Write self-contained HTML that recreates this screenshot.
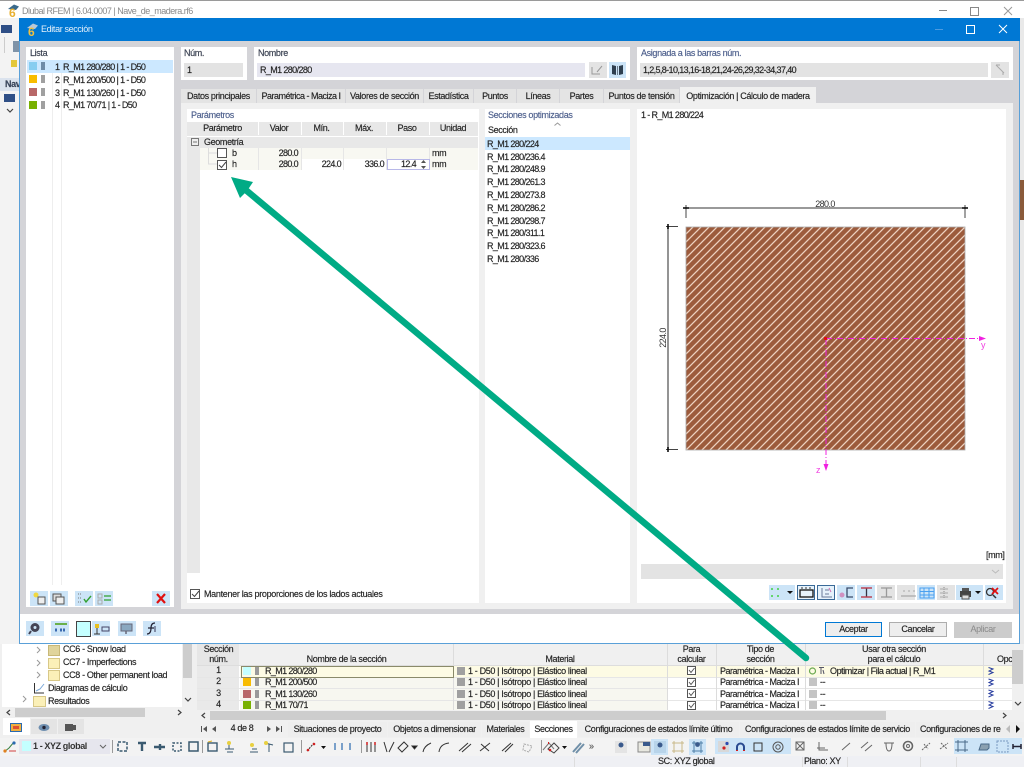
<!DOCTYPE html>
<html lang="es"><head><meta charset="utf-8"><title>Editar sección</title>
<style>
html,body{margin:0;padding:0;width:1024px;height:767px;overflow:hidden;background:#f0f0f0;font-family:"Liberation Sans",sans-serif}
#w{position:absolute;left:0;top:0;width:1024px;height:767px;overflow:hidden;filter:blur(.35px);letter-spacing:-.36px}
.b{position:absolute}
.t{position:absolute;white-space:nowrap;font-size:9px;line-height:11px;color:#222;-webkit-text-stroke:.15px #222}
.n{letter-spacing:-.62px}
.h{color:#4d5f8c;-webkit-text-stroke:.15px #4d5f8c}
.c{text-align:center}
.r{text-align:right}
.ic{position:absolute;width:18px;height:15px;background:#cce4f7}
.g{background:#e3e3e3}
.tab{position:absolute;top:89px;height:14px;background:#e4e4e4;font-size:9px;line-height:15px;text-align:center;color:#222;white-space:nowrap;-webkit-text-stroke:.15px #222}
.bt{position:absolute;top:722px;height:15px;background:#eeeeee;font-size:9px;line-height:14px;text-align:center;color:#222;white-space:nowrap;-webkit-text-stroke:.15px #222}
.hd{position:absolute;background:#e8e8e8;font-size:9px;line-height:13px;text-align:center;color:#222;top:122px;height:13px;-webkit-text-stroke:.15px #222}
svg{position:absolute;overflow:visible}
.chk{position:absolute;width:8px;height:8px;border:1px solid #555;background:#fff}
</style></head><body><div id="w">

<!-- main window -->
<div class="b" style="left:0;top:0;width:1024px;height:1px;background:#9a9a9a"></div>
<div class="b" style="left:0;top:1px;width:1024px;height:17px;background:#fff"></div>
<svg style="left:6px;top:4px" width="14" height="14"><path d="M2 5 L8 0.500 L13 2.500 L10 6 Z" fill="#3a6a8c"/><text x="3" y="13" font-size="12" font-weight="bold" font-family="Liberation Sans" fill="#e8b030">6</text></svg>
<div class="t n" style="left:22px;top:6px;color:#8a8a8a;-webkit-text-stroke:0;letter-spacing:-.5px">Dlubal RFEM | 6.04.0007 | Nave_de_madera.rf6</div>
<div class="b" style="left:939px;top:10px;width:8px;height:1px;background:#888"></div>
<div class="b" style="left:970px;top:7px;width:7px;height:7px;border:1px solid #888"></div>
<svg style="left:1003px;top:6px" width="10" height="10"><path d="M1 1L9 9M9 1L1 9" stroke="#999" fill="none"/></svg>

<div class="b" style="left:0;top:18px;width:19px;height:626px;background:#f3f3f3"></div>
<div class="b" style="left:1px;top:25px;width:11px;height:8px;background:#2f4f86"></div>
<div class="b" style="left:4px;top:37px;width:1px;height:16px;background:#ccc"></div>
<div class="b" style="left:13px;top:41px;width:6px;height:11px;background:#7f93a8"></div>
<div class="b" style="left:11px;top:60px;width:6px;height:7px;background:#e4c83c"></div>
<div class="b" style="left:0;top:78px;width:19px;height:13px;background:#dbe3ee"></div>
<div class="t" style="left:5px;top:79px;font-weight:bold;color:#3c4b66">Nav</div>
<div class="b" style="left:4px;top:94px;width:11px;height:8px;background:#2f4f86"></div>
<svg style="left:6px;top:108px" width="8" height="6"><path d="M1 1L4 4L7 1" stroke="#444" fill="none" stroke-width="1.2"/></svg>
<div class="b" style="left:1020px;top:18px;width:4px;height:626px;background:#e9e9e9"></div>
<div class="b" style="left:1020px;top:180px;width:4px;height:40px;background:#8a5a3a"></div>

<!-- lower left tree -->
<div class="b" style="left:2px;top:644px;width:191px;height:91px;background:#fff"></div>
<div class="b" style="left:182px;top:644px;width:11px;height:63px;background:#f0f0f0"></div>
<div class="b" style="left:183px;top:644px;width:9px;height:34px;background:#cdcdcd"></div>
<svg style="left:184px;top:697px" width="8" height="6"><path d="M1 1L4 4L7 1" stroke="#444" fill="none" stroke-width="1.2"/></svg>
<svg style="left:36px;top:645px" width="6" height="60" fill="none" stroke="#999"><path d="M1 2L4 5L1 8M1 15L4 18L1 21M1 27L4 30L1 33"/><path d="M-13 51L-10 54L-13 57"/></svg>
<div class="b" style="left:48px;top:645px;width:10px;height:9px;background:#e0d49c;border:1px solid #c8b878"></div>
<div class="b" style="left:48px;top:658px;width:10px;height:9px;background:#fbf0b8;border:1px solid #d8c888"></div>
<div class="b" style="left:48px;top:670px;width:10px;height:9px;background:#fbf0b8;border:1px solid #d8c888"></div>
<svg style="left:33px;top:682px" width="12" height="12" fill="none"><path d="M1.500 1V11H11" stroke="#333"/><path d="M3 9L7 7L11 2" stroke="#7aa8d8"/></svg>
<div class="b" style="left:33px;top:696px;width:11px;height:9px;background:#fbf0b8;border:1px solid #d8c888"></div>
<div class="t" style="left:63px;top:644px">CC6 - Snow load</div>
<div class="t" style="left:63px;top:657px">CC7 - Imperfections</div>
<div class="t" style="left:63px;top:670px">CC8 - Other permanent load</div>
<div class="t" style="left:48px;top:683px">Diagramas de cálculo</div>
<div class="t" style="left:48px;top:696px">Resultados</div>
<div class="b" style="left:2px;top:707px;width:191px;height:11px;background:#f0f0f0"></div>
<div class="b" style="left:15px;top:708px;width:130px;height:9px;background:#cdcdcd"></div>
<svg style="left:6px;top:709px" width="180" height="7" fill="none" stroke="#444" stroke-width="1.2"><path d="M4 1L1 3.500L4 6M172 1L175 3.500L172 6"/></svg>
<div class="b" style="left:2px;top:718px;width:191px;height:17px;background:#f0f0f0"></div>
<div class="b" style="left:3px;top:718px;width:27px;height:17px;background:#fff"></div>
<div class="b" style="left:31px;top:719px;width:26px;height:15px;background:#e4e4e4"></div>
<div class="b" style="left:58px;top:719px;width:26px;height:15px;background:#e4e4e4"></div>
<svg style="left:10px;top:722px" width="13" height="11"><rect x="0.500" y="1.500" width="11" height="8" fill="#f0b040" stroke="#2a6ab0"/><rect x="3" y="4" width="6" height="3" fill="#e05030"/></svg>
<svg style="left:38px;top:723px" width="12" height="9"><ellipse cx="6" cy="4.500" rx="5.500" ry="3.500" fill="#6f8fb0"/><circle cx="6" cy="4.500" r="1.700" fill="#223"/></svg>
<div class="b" style="left:65px;top:724px;width:8px;height:7px;background:#555"></div>
<div class="b" style="left:73px;top:725px;width:3px;height:5px;background:#555"></div>

<!-- lower table -->
<div class="b" style="left:197px;top:644px;width:827px;height:66px;background:#fff"></div>
<div class="b" style="left:197px;top:644px;width:815px;height:21px;background:#f0f0f0"></div>
<div class="b" style="left:197px;top:644px;width:42px;height:21px;background:#e6e6e6"></div>
<div class="b" style="left:197px;top:666px;width:42px;height:44px;background:#e9e9e9"></div>
<div class="b" style="left:197px;top:665px;width:815px;height:1px;background:#ddd"></div>
<div class="b" style="left:240px;top:666px;width:772px;height:11px;background:#fdfbe4"></div>
<div class="b" style="left:240px;top:678px;width:476px;height:32px;background:#f7f7f0"></div>
<div class="b" style="left:667px;top:678px;width:49px;height:32px;background:#fff"></div>
<div class="b" style="left:197px;top:677px;width:815px;height:1px;background:#e6e6e6"></div>
<div class="b" style="left:197px;top:688px;width:815px;height:1px;background:#e6e6e6"></div>
<div class="b" style="left:197px;top:700px;width:815px;height:1px;background:#e6e6e6"></div>
<div class="b" style="left:453px;top:644px;width:1px;height:66px;background:#dcdcdc"></div>
<div class="b" style="left:667px;top:644px;width:1px;height:66px;background:#dcdcdc"></div>
<div class="b" style="left:716px;top:644px;width:1px;height:66px;background:#dcdcdc"></div>
<div class="b" style="left:805px;top:644px;width:1px;height:66px;background:#dcdcdc"></div>
<div class="b" style="left:983px;top:644px;width:1px;height:66px;background:#dcdcdc"></div>
<div class="b" style="left:241px;top:666px;width:211px;height:10px;border:1px solid #8a8a6a;background:#fdfbe4"></div>
<div class="t c" style="left:197px;top:645px;width:43px;line-height:9.500px">Sección<br>núm.</div>
<div class="t c" style="left:240px;top:654px;width:213px">Nombre de la sección</div>
<div class="t c" style="left:453px;top:654px;width:214px">Material</div>
<div class="t c" style="left:667px;top:645px;width:49px;line-height:9.500px">Para<br>calcular</div>
<div class="t c" style="left:716px;top:645px;width:89px;line-height:9.500px">Tipo de<br>sección</div>
<div class="t c" style="left:805px;top:645px;width:178px;line-height:9.500px">Usar otra sección<br>para el cálculo</div>
<div class="t" style="left:997px;top:654px">Opc</div>

<div class="t c" style="left:197px;top:665px;width:43px">1</div>
<div class="t c" style="left:197px;top:676px;width:43px">2</div>
<div class="t c" style="left:197px;top:688px;width:43px">3</div>
<div class="t c" style="left:197px;top:699px;width:43px">4</div>
<div class="b" style="left:243px;top:667px;width:8px;height:8px;background:#c4ffff"></div>
<div class="b" style="left:243px;top:678px;width:8px;height:8px;background:#f8bc00"></div>
<div class="b" style="left:243px;top:690px;width:8px;height:8px;background:#b86868"></div>
<div class="b" style="left:243px;top:701px;width:8px;height:8px;background:#78b000"></div>
<div class="b" style="left:255px;top:667px;width:4px;height:8px;background:#9a9a9a"></div>
<div class="b" style="left:255px;top:678px;width:4px;height:8px;background:#9a9a9a"></div>
<div class="b" style="left:255px;top:690px;width:4px;height:8px;background:#9a9a9a"></div>
<div class="b" style="left:255px;top:701px;width:4px;height:8px;background:#9a9a9a"></div>
<div class="t n" style="left:265px;top:666px">R_M1 280/280</div>
<div class="t n" style="left:265px;top:677px">R_M1 200/500</div>
<div class="t n" style="left:265px;top:689px">R_M1 130/260</div>
<div class="t n" style="left:265px;top:700px;height:10px;overflow:hidden">R_M1 70/71</div>
<div class="b" style="left:457px;top:667px;width:8px;height:8px;background:#a0a0a0"></div>
<div class="b" style="left:457px;top:678px;width:8px;height:8px;background:#a0a0a0"></div>
<div class="b" style="left:457px;top:690px;width:8px;height:8px;background:#a0a0a0"></div>
<div class="b" style="left:457px;top:701px;width:8px;height:8px;background:#a0a0a0"></div>
<div class="t" style="left:468px;top:666px">1 - D50 | Isótropo | Elástico lineal</div>
<div class="t" style="left:468px;top:677px">1 - D50 | Isótropo | Elástico lineal</div>
<div class="t" style="left:468px;top:689px">1 - D50 | Isótropo | Elástico lineal</div>
<div class="t" style="left:468px;top:700px;height:10px;overflow:hidden">1 - D50 | Isótropo | Elástico lineal</div>
<svg style="left:687px;top:666px" width="10" height="44" fill="#fff" stroke="#555"><rect x=".5" y=".5" width="8" height="8"/><rect x=".5" y="12.5" width="8" height="8"/><rect x=".5" y="23.5" width="8" height="8"/><rect x=".5" y="35.5" width="8" height="8"/><path d="M2 4L4 6.500L7.500 2M2 16L4 18.500L7.500 14M2 27L4 29.500L7.500 25M2 39L4 41.500L7.500 37" fill="none"/></svg>
<div class="t" style="left:720px;top:666px;letter-spacing:-.5px">Paramétrica - Maciza I</div>
<div class="t" style="left:720px;top:677px;letter-spacing:-.5px">Paramétrica - Maciza I</div>
<div class="t" style="left:720px;top:689px;letter-spacing:-.5px">Paramétrica - Maciza I</div>
<div class="t" style="left:720px;top:700px;height:10px;overflow:hidden;letter-spacing:-.5px">Paramétrica - Maciza I</div>
<svg style="left:808px;top:666px" width="18" height="10" fill="none"><circle cx="4.500" cy="5" r="3" stroke="#6aa84f" stroke-width="1.2"/><path d="M11 1.500H16M13 1.500V8" stroke="#556"/><path d="M15 4L16 8" stroke="#556"/></svg>
<div class="b" style="left:809px;top:678px;width:8px;height:8px;background:#c4c4c4"></div>
<div class="b" style="left:809px;top:690px;width:8px;height:8px;background:#c4c4c4"></div>
<div class="b" style="left:809px;top:701px;width:8px;height:8px;background:#c4c4c4"></div>
<div class="t" style="left:830px;top:666px;letter-spacing:-.43px">Optimizar | Fila actual | R_M1</div>
<div class="t" style="left:820px;top:677px">--</div>
<div class="t" style="left:820px;top:689px">--</div>
<div class="t" style="left:820px;top:700px">--</div>
<svg style="left:987px;top:666px" width="8" height="44" fill="none" stroke="#2a3fa0"><path d="M1.500 1.500L6 3L2 5L6 6.500L1.500 8.500M1.500 13L6 14.500L2 16.500L6 18L1.500 20M1.500 24L6 25.500L2 27.500L6 29L1.500 31M1.500 35.500L6 37L2 39L6 40.500L1.500 42.500"/></svg>
<div class="b" style="left:1012px;top:644px;width:12px;height:66px;background:#f0f0f0"></div>
<div class="b" style="left:1012px;top:650px;width:11px;height:34px;background:#cdcdcd"></div>
<svg style="left:1014px;top:701px" width="8" height="6"><path d="M1 1L4 4L7 1" stroke="#444" fill="none" stroke-width="1.2"/></svg>
<div class="b" style="left:197px;top:710px;width:827px;height:11px;background:#f0f0f0"></div>
<div class="b" style="left:210px;top:711px;width:676px;height:9px;background:#cdcdcd"></div>
<svg style="left:201px;top:712px" width="810" height="7" fill="none" stroke="#444" stroke-width="1.2"><path d="M4 1L1 3.500L4 6M802 1L805 3.500L802 6"/></svg>

<!-- lower tabs -->
<div class="b" style="left:197px;top:721px;width:827px;height:17px;background:#f0f0f0"></div>
<svg style="left:201px;top:725px" width="85" height="8" fill="#555"><path d="M0 1H1V7H0ZM6 1V7L2 4ZM15 1V7L11 4ZM66 1V7L70 4ZM75 1V7L79 4ZM80 1H81V7H80Z"/></svg>
<div class="t c" style="left:222px;top:723px;width:40px">4 de 8</div>
<div class="bt" style="left:288px;width:99px">Situaciones de proyecto</div>
<div class="bt" style="left:388px;width:93px">Objetos a dimensionar</div>
<div class="bt" style="left:482px;width:47px">Materiales</div>
<div class="bt" style="left:530px;width:47px;background:#fff;top:721px;height:17px;line-height:16px">Secciones</div>
<div class="bt" style="left:578px;width:161px">Configuraciones de estados límite último</div>
<div class="bt" style="left:740px;width:175px">Configuraciones de estados límite de servicio</div>
<div class="bt" style="left:916px;width:108px;text-align:left;text-indent:4px;overflow:hidden">Configuraciones de re</div>
<div class="b" style="left:1001px;top:722px;width:23px;height:15px;background:#eee"></div>
<svg style="left:1005px;top:725px" width="15" height="9"><path d="M5 0V8L1 4Z" fill="#bbb"/><path d="M11 0V8L15 4Z" fill="#111"/></svg>

<!-- lower toolbar -->
<div class="b" style="left:0;top:738px;width:1024px;height:18px;background:#f3f3f3"></div>
<div class="b" style="left:0;top:756px;width:1024px;height:11px;background:#eff0f4"></div>
<div class="b" style="left:574px;top:757px;width:1px;height:10px;background:#ddd"></div>
<div class="b" style="left:802px;top:757px;width:1px;height:10px;background:#ddd"></div>
<div class="b" style="left:847px;top:757px;width:1px;height:10px;background:#ddd"></div>
<div class="b" style="left:920px;top:757px;width:1px;height:10px;background:#ddd"></div>
<div class="b" style="left:956px;top:757px;width:1px;height:10px;background:#ddd"></div>
<div class="b" style="left:19px;top:739px;width:91px;height:15px;background:#e6e6ee"></div>
<div class="b" style="left:22px;top:741px;width:9px;height:10px;background:#c4ffff"></div>
<div class="t" style="left:33px;top:741px;font-weight:bold;-webkit-text-stroke:0;letter-spacing:-.4px;color:#333">1 - XYZ global</div>
<svg style="left:99px;top:744px" width="8" height="6"><path d="M1 1L4 4L7 1" stroke="#666" fill="none"/></svg>
<svg style="left:3px;top:740px" width="14" height="14" fill="none"><path d="M1 12L6 8L11 2" stroke="#3a8040"/><circle cx="2" cy="11" r="1.600" fill="#e08020"/><circle cx="11" cy="3" r="1.600" fill="#2a6ab0"/><path d="M6 11H13" stroke="#d04040"/></svg>
<div class="b" style="left:112px;top:740px;width:1px;height:13px;background:#999"></div>
<svg style="left:116px;top:740px" width="100" height="14" fill="none" stroke="#3a5a70" stroke-width="1.5">
<rect x="2" y="2" width="9" height="9" stroke-dasharray="3 1.5"/><path d="M22 3H30M26 3V11" stroke-width="2.4"/><path d="M38 7H49M44 4V10" stroke-width="2.4"/><rect x="57" y="3" width="8" height="8" stroke-dasharray="2 1.5"/><rect x="73" y="2" width="9" height="9"/></svg>
<div class="b" style="left:202px;top:740px;width:1px;height:13px;background:#999"></div>
<svg style="left:207px;top:740px" width="90" height="14" fill="none" stroke="#3a5a70">
<rect x="1" y="3" width="9" height="8" stroke-width="1.4"/><path d="M1 2L5 1" stroke="#e0b020"/><path d="M18 9H27M20 12H26M22 3V9" /><circle cx="22" cy="3" r="2" fill="#e8d040" stroke="none"/><path d="M43 12H51M45 9H50"/><circle cx="45" cy="5" r="2" fill="#e8d040" stroke="none"/><path d="M58 3L66 5M62 4V12"/><circle cx="59" cy="3" r="2" fill="#e8d040" stroke="none"/><rect x="77" y="3" width="9" height="9" stroke-width="1.2"/></svg>
<div class="b" style="left:301px;top:740px;width:1px;height:13px;background:#999"></div>
<svg style="left:306px;top:740px" width="66" height="14" fill="none"><path d="M1 11L8 3" stroke="#333" stroke-dasharray="2 1"/><circle cx="2" cy="10" r="1.300" fill="#d02020"/><circle cx="8" cy="4" r="1.300" fill="#d02020"/><path d="M15 6H20L17.500 9Z" fill="#111"/><path d="M29 3V10M36 3V10M44 3V10" stroke="#2a6ab0" stroke-width="1.2"/></svg>
<div class="b" style="left:361px;top:740px;width:1px;height:13px;background:#999"></div>
<svg style="left:362px;top:740px" width="230" height="14" fill="none" stroke="#333" stroke-width="1">
<path d="M5 2V12M9 2V12M13 2V12" stroke-width="1"/><path d="M5 2V5M13 2V5" stroke="#d02020" stroke-width="1.5"/><path d="M22 2L25 12M32 2L27 12"/><path d="M36 8L42 2L46 6L40 12Z"/><path d="M50 6H55L52.500 9Z" fill="#111"/><path d="M61 12Q62 6 69 3"/><path d="M77 12Q78 4 87 3"/><path d="M97 11L106 3M100 12L109 4" /><path d="M118 11L128 3M119 4L127 11" /><path d="M140 11L149 3M143 12L151 4"/><path d="M162 4L170 6L167 12L161 10Z" stroke="#aaa" stroke-dasharray="2 1"/><path d="M181 10L187 3L192 9" stroke="#777"/><path d="M186 3L187 3" stroke="#d02020" stroke-width="2"/></svg>
<div class="b" style="left:541px;top:740px;width:1px;height:13px;background:#999"></div>
<svg style="left:546px;top:740px" width="60" height="14" fill="none"><path d="M2 9L8 3L13 8L8 13Z" stroke="#444"/><circle cx="4" cy="10" r="1.300" fill="#d02020"/><path d="M16 6H21L18.500 9Z" fill="#111"/><path d="M27 12L35 3M30 13L38 4" stroke="#7090a8" stroke-width="2"/></svg>
<div class="t" style="left:589px;top:741px;color:#777">»</div>
<svg style="left:615px;top:741px" width="12" height="12"><rect width="12" height="12" fill="#ddd" opacity=".7"/><circle cx="6" cy="4" r="2.500" fill="#3a5a8c"/></svg>
<svg style="left:637px;top:741px" width="14" height="12"><rect x="1" y="1" width="12" height="10" fill="#e8e8e0" stroke="#888"/><rect x="6" y="1" width="7" height="4" fill="#3a5a8c"/></svg>
<div class="b" style="left:651px;top:739px;width:17px;height:16px;background:#cce4f7"></div>
<svg style="left:654px;top:741px" width="12" height="12"><rect width="12" height="12" fill="#b8d4ea"/><circle cx="6" cy="4" r="2.500" fill="#3a5a8c"/></svg>
<svg style="left:672px;top:741px" width="12" height="12" fill="none" stroke="#c8b888"><rect x="2" y="2" width="8" height="8"/><path d="M0 2H12M0 10H12M2 0V12M10 0V12"/></svg>
<div class="b" style="left:689px;top:739px;width:17px;height:16px;background:#cce4f7"></div>
<svg style="left:691px;top:741px" width="13" height="12" fill="none" stroke="#5080a8"><path d="M1 2H12M1 10H12M3 0V12M10 0V12"/><circle cx="6.500" cy="3.500" r="2.400" fill="#3a5a8c" stroke="none"/></svg>
<div class="b" style="left:715px;top:738px;width:76px;height:16px;background:#cce4f7"></div>
<svg style="left:717px;top:740px" width="72" height="13" fill="none"><rect x="1" y="1" width="11" height="11" fill="#d8d8d8"/><circle cx="10" cy="3.500" r="1.600" fill="#2a4ab0"/><circle cx="7" cy="8" r="1.600" fill="#d02020"/><path d="M20 11V7A3.500 3.500 0 0 1 27 7V11" stroke="#2a4a90" stroke-width="2"/><path d="M20 10V11M27 10V11" stroke="#d02020" stroke-width="2"/><rect x="37" y="3" width="8" height="8" stroke="#333"/><circle cx="61" cy="7" r="5" stroke="#555"/><circle cx="61" cy="7" r="2.200" stroke="#555"/></svg>
<svg style="left:790px;top:740px" width="180" height="13" fill="none" stroke="#666">
<rect x="6" y="2" width="8" height="8"/><path d="M6 2L14 10M14 2L6 10"/><path d="M29 2V10H38M27 8H35"/><path d="M52 10L60 3"/><path d="M71 8L78 2M75 11L82 5"/><path d="M94 3H104M96 3Q96 11 99 11Q102 11 102 3"/><circle cx="118" cy="6" r="4.500" stroke-width="1.6"/><circle cx="118" cy="6" r="1.500"/><path d="M132 10L140 3M134 4L138 9" stroke-dasharray="2 1"/><path d="M150 9L158 3M151 3L157 9" stroke-dasharray="2 1"/><path d="M168 9L176 3M169 3L175 9" stroke-dasharray="1.5 1"/></svg>
<div class="b" style="left:954px;top:738px;width:68px;height:16px;background:#cce4f7"></div>
<svg style="left:955px;top:740px" width="66" height="13" fill="none" stroke="#4a6a88"><path d="M0 2H13M0 10H13M3 0V12M10 0V12"/><path d="M24 10L26 4H34V8L32 10Z" fill="#8aa0b0"/><rect x="42" y="1" width="11" height="11" stroke="#7a9ac0" stroke-dasharray="2 1"/><path d="M58 4V9M66 4V9M58 6.500H66" stroke="#223" stroke-width="1.5"/></svg>

<div class="t" style="left:658px;top:756px">SC: XYZ global</div>
<div class="t" style="left:804px;top:756px">Plano: XY</div>

<!-- dialog -->
<div class="b" style="left:19px;top:18px;width:1001px;height:626px;background:#fff;outline:1px solid #5aa0d8;outline-offset:-1px"></div>
<div class="b" style="left:19px;top:18px;width:1001px;height:23px;background:#0078d4"></div>
<svg style="left:25px;top:23px" width="14" height="14"><path d="M2 5 L8 0.500 L13 2.500 L10 6 Z" fill="#b8c8d8"/><text x="3" y="13" font-size="12" font-weight="bold" font-family="Liberation Sans" fill="#f0c040">6</text></svg>
<div class="t" style="left:41px;top:24px;color:#e4f0fa;-webkit-text-stroke:0">Editar sección</div>
<div class="b" style="left:935px;top:29px;width:8px;height:1px;background:#4d9be0"></div>
<div class="b" style="left:966px;top:25px;width:7px;height:7px;border:1px solid #fff"></div>
<svg style="left:998px;top:24px" width="10" height="10"><path d="M1 1L9 9M9 1L1 9" stroke="#fff" fill="none"/></svg>
<div class="b" style="left:20px;top:41px;width:999px;height:573px;background:#d4d4d8"></div>
<div class="b" style="left:20px;top:614px;width:999px;height:29px;background:#fff"></div>

<!-- lista -->
<div class="b" style="left:26px;top:47px;width:148px;height:560px;background:#fff"></div>
<div class="t" style="left:30px;top:48px;color:#3f4a63">Lista</div>
<div class="b" style="left:27px;top:60px;width:146px;height:13px;background:#cce8ff"></div>
<div class="b" style="left:61px;top:73px;width:1px;height:512px;background:#eee"></div>
<div class="b" style="left:52px;top:73px;width:1px;height:512px;background:#eee"></div>
<div class="b" style="left:29px;top:62px;width:8px;height:8px;background:#87cdf0"></div>
<div class="b" style="left:29px;top:75px;width:8px;height:8px;background:#f8bc00"></div>
<div class="b" style="left:29px;top:88px;width:8px;height:8px;background:#b86868"></div>
<div class="b" style="left:29px;top:101px;width:8px;height:8px;background:#78b000"></div>
<div class="b" style="left:41px;top:62px;width:4px;height:8px;background:#6e8ca8"></div>
<div class="b" style="left:41px;top:75px;width:4px;height:8px;background:#a0a0a0"></div>
<div class="b" style="left:41px;top:88px;width:4px;height:8px;background:#a0a0a0"></div>
<div class="b" style="left:41px;top:101px;width:4px;height:8px;background:#a0a0a0"></div>
<div class="t" style="left:55px;top:62px">1</div><div class="t n" style="left:63px;top:62px">R_M1 280/280 | 1 - D50</div>
<div class="t" style="left:55px;top:75px">2</div><div class="t n" style="left:63px;top:75px">R_M1 200/500 | 1 - D50</div>
<div class="t" style="left:55px;top:88px">3</div><div class="t n" style="left:63px;top:88px">R_M1 130/260 | 1 - D50</div>
<div class="t" style="left:55px;top:100px">4</div><div class="t n" style="left:63px;top:100px">R_M1 70/71 | 1 - D50</div>

<div class="ic" style="left:30px;top:591px"></div><div class="ic" style="left:50px;top:591px"></div><div class="ic" style="left:75px;top:591px"></div><div class="ic" style="left:95px;top:591px"></div><div class="ic" style="left:152px;top:591px"></div>
<svg style="left:30px;top:591px" width="140" height="15" fill="none">
<circle cx="6" cy="4" r="2.500" fill="#f0d840"/><rect x="8" y="6" width="7" height="7" stroke="#555" fill="#eee"/>
<rect x="23" y="3" width="8" height="7" stroke="#555" fill="#ddd"/><rect x="26" y="6" width="8" height="7" stroke="#555" fill="#eee"/>
<path d="M48 3H52M48 7H52M48 11H52" stroke="#777" stroke-dasharray="1 1"/><path d="M54 8L56 11L61 5" stroke="#30a030" stroke-width="1.4"/>
<rect x="68" y="3" width="4" height="4" stroke="#aaa"/><rect x="68" y="9" width="4" height="4" stroke="#aaa"/><path d="M74 5H81M74 9H81" stroke="#30a030" stroke-width="1.2"/>
<path d="M127 3L135 12M135 3L127 12" stroke="#e01010" stroke-width="2.200"/></svg>

<!-- num / nombre / asignada -->
<div class="b" style="left:181px;top:47px;width:66px;height:33px;background:#fff"></div>
<div class="t" style="left:184px;top:48px;color:#3f4a63">Núm.</div>
<div class="b g" style="left:184px;top:63px;width:59px;height:14px"></div>
<div class="t" style="left:187px;top:65px">1</div>
<div class="b" style="left:254px;top:47px;width:376px;height:33px;background:#fff"></div>
<div class="t" style="left:258px;top:48px;color:#3f4a63">Nombre</div>
<div class="b" style="left:257px;top:63px;width:328px;height:14px;background:#e6e6f0"></div>
<div class="t n" style="left:260px;top:65px">R_M1 280/280</div>
<div class="b g" style="left:589px;top:62px;width:18px;height:16px"></div>
<svg style="left:591px;top:64px" width="14" height="12" fill="none" stroke="#999"><path d="M1 3V10H9M6 8L11 2"/></svg>
<div class="b" style="left:609px;top:62px;width:17px;height:16px;background:#cce4f7"></div>
<svg style="left:611px;top:64px" width="13" height="12"><path d="M1 1L5 2V11L1 10ZM12 1L8 2V11L12 10Z" fill="#2f3f4f"/><path d="M6 2H7V11H6Z" fill="#6a7a8a"/></svg>
<div class="b" style="left:637px;top:47px;width:376px;height:33px;background:#fff"></div>
<div class="t h" style="left:641px;top:48px">Asignada a las barras núm.</div>
<div class="b g" style="left:640px;top:63px;width:348px;height:14px"></div>
<div class="t n" style="left:643px;top:65px">1,2,5,8-10,13,16-18,21,24-26,29,32-34,37,40</div>
<div class="b g" style="left:991px;top:62px;width:18px;height:16px"></div>
<svg style="left:995px;top:64px" width="11" height="12" fill="none" stroke="#aaa"><path d="M1 1L8 8V11M1 1H5M4 4L9 9"/></svg>

<!-- tabs -->
<div class="tab" style="left:181px;width:75px">Datos principales</div>
<div class="tab" style="left:257px;width:88px;letter-spacing:-.5px">Paramétrica - Maciza I</div>
<div class="tab" style="left:346px;width:77px">Valores de sección</div>
<div class="tab" style="left:424px;width:49px">Estadística</div>
<div class="tab" style="left:474px;width:42px">Puntos</div>
<div class="tab" style="left:517px;width:42px">Líneas</div>
<div class="tab" style="left:560px;width:43px">Partes</div>
<div class="tab" style="left:604px;width:75px">Puntos de tensión</div>
<div class="tab" style="left:680px;width:136px;top:87px;height:16px;background:#f0f0f0;line-height:18px">Optimización | Cálculo de madera</div>
<div class="b" style="left:181px;top:103px;width:832px;height:506px;background:#f0f0f0"></div>

<!-- parametros -->
<div class="b" style="left:187px;top:109px;width:292px;height:494px;background:#fff"></div>
<div class="t h" style="left:191px;top:110px">Parámetros</div>
<div class="b" style="left:187px;top:122px;width:291px;height:14px;background:#e8e8e8"></div>
<div class="hd" style="left:188px;width:69px">Parámetro</div>
<div class="hd" style="left:258px;width:42px">Valor</div>
<div class="hd" style="left:301px;width:41px">Mín.</div>
<div class="hd" style="left:343px;width:42px">Máx.</div>
<div class="hd" style="left:386px;width:42px">Paso</div>
<div class="hd" style="left:429px;width:48px">Unidad</div>
<div class="b" style="left:258px;top:122px;width:1px;height:13px;background:#fff"></div>
<div class="b" style="left:301px;top:122px;width:1px;height:13px;background:#fff"></div>
<div class="b" style="left:343px;top:122px;width:1px;height:13px;background:#fff"></div>
<div class="b" style="left:386px;top:122px;width:1px;height:13px;background:#fff"></div>
<div class="b" style="left:429px;top:122px;width:1px;height:13px;background:#fff"></div>
<div class="b" style="left:187px;top:137px;width:291px;height:11px;background:#e8e8e8"></div>
<div class="b" style="left:187px;top:148px;width:13px;height:425px;background:#e8e8e8"></div>
<div class="b" style="left:200px;top:148px;width:278px;height:22px;background:#f8f8f2"></div>
<div class="b" style="left:301px;top:159px;width:128px;height:11px;background:#fff"></div>
<div class="b" style="left:258px;top:148px;width:1px;height:22px;background:#e6e6e6"></div>
<div class="b" style="left:301px;top:148px;width:1px;height:22px;background:#e6e6e6"></div>
<div class="b" style="left:343px;top:148px;width:1px;height:22px;background:#e6e6e6"></div>
<div class="b" style="left:386px;top:148px;width:1px;height:22px;background:#e6e6e6"></div>
<div class="b" style="left:429px;top:148px;width:1px;height:22px;background:#e6e6e6"></div>
<svg style="left:191px;top:138px" width="9" height="9" fill="none" stroke="#777"><rect x=".5" y=".5" width="7" height="7" fill="#eee"/><path d="M2 4H6"/></svg>
<div class="t" style="left:204px;top:137px">Geometría</div>
<svg style="left:208px;top:148px" width="10" height="18" fill="none" stroke="#ddd"><path d="M.5 0V16H10M.5 5H10"/></svg>
<div class="chk" style="left:217px;top:148px"></div>
<div class="chk" style="left:217px;top:160px"></div>
<svg style="left:218px;top:161px" width="9" height="9" fill="none" stroke="#444"><path d="M1 4L3.500 6.500L8 1"/></svg>
<div class="t" style="left:232px;top:148px">b</div>
<div class="t" style="left:232px;top:159px">h</div>
<div class="t r n" style="left:258px;top:148px;width:40px">280.0</div>
<div class="t r n" style="left:258px;top:159px;width:40px">280.0</div>
<div class="t r n" style="left:301px;top:159px;width:40px">224.0</div>
<div class="t r n" style="left:343px;top:159px;width:41px">336.0</div>
<div class="b" style="left:387px;top:159px;width:41px;height:9px;border:1px solid #b8b8e8;background:#fff"></div>
<div class="t r n" style="left:387px;top:159px;width:29px">12.4</div>
<svg style="left:421px;top:160px" width="5" height="9"><path d="M0 3L2.500 0L5 3ZM0 6L2.500 9L5 6Z" fill="#555"/></svg>
<div class="t" style="left:432px;top:148px">mm</div>
<div class="t" style="left:432px;top:159px">mm</div>
<div class="chk" style="left:190px;top:589px"></div>
<svg style="left:191px;top:590px" width="9" height="9" fill="none" stroke="#444"><path d="M1 4L3.500 6.500L8 1"/></svg>
<div class="t" style="left:204px;top:589px;letter-spacing:-.31px">Mantener las proporciones de los lados actuales</div>

<!-- secciones optimizadas -->
<div class="b" style="left:485px;top:109px;width:145px;height:494px;background:#fff"></div>
<div class="t h" style="left:488px;top:110px">Secciones optimizadas</div>
<svg style="left:554px;top:122px" width="7" height="4" fill="none" stroke="#999"><path d="M.5 3.500L3.500 1L6.500 3.500"/></svg>
<div class="t" style="left:488px;top:125px">Sección</div>
<div class="b" style="left:485px;top:137px;width:145px;height:13px;background:#cce8ff"></div>
<div class="t n" style="left:487px;top:139px">R_M1 280/224</div>
<div class="t n" style="left:487px;top:152px">R_M1 280/236.4</div>
<div class="t n" style="left:487px;top:164px">R_M1 280/248.9</div>
<div class="t n" style="left:487px;top:177px">R_M1 280/261.3</div>
<div class="t n" style="left:487px;top:190px">R_M1 280/273.8</div>
<div class="t n" style="left:487px;top:203px">R_M1 280/286.2</div>
<div class="t n" style="left:487px;top:216px">R_M1 280/298.7</div>
<div class="t n" style="left:487px;top:228px">R_M1 280/311.1</div>
<div class="t n" style="left:487px;top:241px">R_M1 280/323.6</div>
<div class="t n" style="left:487px;top:254px">R_M1 280/336</div>

<!-- preview -->
<div class="b" style="left:637px;top:109px;width:369px;height:494px;background:#fff"></div>
<div class="t n" style="left:641px;top:110px">1 - R_M1 280/224</div>
<svg style="left:0;top:0" width="1024" height="767">
<defs><pattern id="p" width="8" height="8" patternUnits="userSpaceOnUse"><rect width="8" height="8" fill="#9c5b3c"/><path d="M-2 2L2 -2M0 8L8 0M6 10L10 6" stroke="#eed2c0" stroke-width="1.300"/></pattern></defs>
<rect x="686" y="227" width="279" height="223" fill="url(#p)" stroke="#aaa" stroke-width=".8"/>
<path d="M686 208H965" stroke="#333" stroke-width="1"/><path d="M686 205V218M965 205V218" stroke="#444"/><path d="M683 208H689M962 208H968" stroke="#000" stroke-width="1.500"/>
<path d="M668 226V450" stroke="#666" stroke-width="1.400"/><path d="M666 226.500H678M666 449.500H678" stroke="#444"/><path d="M668 224V229M668 447V452" stroke="#000" stroke-width="1.500"/>
<text x="825" y="207" font-family="Liberation Sans" font-size="9" letter-spacing="-.6" fill="#333" text-anchor="middle">280.0</text>
<text transform="translate(666 338) rotate(-90)" font-family="Liberation Sans" font-size="9" letter-spacing="-.6" fill="#333" text-anchor="middle">224.0</text>
<path d="M826 338.500H978" stroke="#f020e0" stroke-dasharray="6 2 1 2"/><path d="M826 339V466" stroke="#f020e0" stroke-dasharray="6 2 1 2"/>
<path d="M979 336L986 338.500L979 341ZM823.500 464L826 471L828.500 464Z" fill="#f020e0"/>
<rect x="824" y="337" width="3" height="3" fill="#e01010"/>
<text x="981" y="348" font-family="Liberation Sans" font-size="9" fill="#f040e0">y</text>
<text x="816" y="473" font-family="Liberation Sans" font-size="9" fill="#f040e0">z</text>
</svg>
<div class="t" style="left:986px;top:550px">[mm]</div>
<div class="b g" style="left:641px;top:564px;width:362px;height:15px"></div>
<svg style="left:991px;top:569px" width="9" height="6" fill="none" stroke="#bbb"><path d="M1 1L4.500 4L8 1"/></svg>

<!-- preview toolbar -->
<div class="ic" style="left:769px;top:585px;width:26px"></div>
<div class="b" style="left:797px;top:585px;width:16px;height:13px;background:#e6f2fb;border:1px solid #3a6a98"></div>
<div class="b" style="left:817px;top:585px;width:16px;height:13px;background:#e6f2fb;border:1px solid #3a6a98"></div>
<div class="ic" style="left:837px;top:585px"></div><div class="ic" style="left:857px;top:585px"></div>
<div class="ic g" style="left:877px;top:585px"></div><div class="ic g" style="left:897px;top:585px"></div>
<div class="ic" style="left:917px;top:585px"></div><div class="ic g" style="left:937px;top:585px"></div>
<div class="ic" style="left:956px;top:585px;width:27px"></div><div class="ic" style="left:985px;top:585px"></div>
<svg style="left:769px;top:585px" width="236" height="15" fill="none">
<path d="M2 4H4M8 4H10M2 11H4M8 11H10" stroke="#40d040" stroke-width="1.500"/><path d="M18 6H24L21 9Z" fill="#111"/>
<rect x="31" y="5" width="13" height="7" stroke="#111" stroke-width="1.300"/><path d="M33 4V2M37 4V2M41 4V2" stroke="#333"/>
<path d="M53 3V12H63M56 5H60M56 9H60" stroke="#6a7a98"/><path d="M60 3L62 7" stroke="#d070b0"/>
<path d="M84 3H78V12H84" stroke="#3a4a6a" stroke-width="1.300"/><circle cx="73" cy="10" r="2.500" fill="#d090c0"/>
<path d="M92 3H103M92 12H103M97.500 3V12" stroke="#334" stroke-width="1.300"/><path d="M92 3H103M92 12H103" stroke="#d04050" stroke-width="1.300"/>
<path d="M112 3H123M112 12H123M117.500 3V12" stroke="#999" stroke-width="1.300"/>
<path d="M132 11H147" stroke="#999"/><path d="M134 6H136M139 6H141M144 6H146" stroke="#aaa"/>
<path d="M151 3H165V13H151ZM151 6.500H165M151 10H165M155 3V13M160 3V13" stroke="#4aa0f0"/>
<path d="M175 2V13" stroke="#888" stroke-dasharray="1 1"/><path d="M171 4H179M171 8H179M171 12H179" stroke="#aaa"/>
<rect x="191" y="6" width="11" height="6" fill="#444"/><rect x="193" y="3" width="7" height="3" fill="#555"/><rect x="193" y="10" width="7" height="4" fill="#ddd" stroke="#555"/><path d="M206 6H212L209 9Z" fill="#111"/>
<circle cx="221" cy="7" r="3.500" stroke="#333" stroke-width="1.300"/><path d="M224 10L227 13" stroke="#333" stroke-width="1.500"/><path d="M223 3L229 9M229 3L223 9" stroke="#e01010" stroke-width="1.700"/>
</svg>

<!-- bottom icons -->
<div class="ic" style="left:26px;top:621px"></div><div class="ic" style="left:51px;top:621px"></div>
<div class="b" style="left:76px;top:621px;width:13px;height:14px;background:#c4ffff;border:1px solid #444"></div>
<div class="ic" style="left:92px;top:621px"></div><div class="ic" style="left:118px;top:621px"></div><div class="ic" style="left:143px;top:621px"></div>
<svg style="left:26px;top:621px" width="136" height="15" fill="none">
<circle cx="9" cy="6.500" r="4.500" fill="#445" /><path d="M5 10L3 13" stroke="#445" stroke-width="2"/><circle cx="9" cy="6.500" r="1.500" fill="#cce4f7"/>
<rect x="29" y="2" width="12" height="2" fill="#6ab04a"/><path d="M29 9h3M34 9h6" stroke="#3a6ab0" stroke-width="3" stroke-dasharray="2 1"/>
<rect x="69" y="3" width="4" height="4" fill="#e8c020"/><path d="M71 7V13M68 13H74" stroke="#333"/><rect x="76" y="6" width="7" height="4" stroke="#446"/>
<rect x="95" y="3" width="11" height="7" fill="#8aa8c0" stroke="#667"/><path d="M100 10V13" stroke="#667" stroke-width="1.500"/>
<path d="M121 13Q125 13 125 7Q125 2 129 2M122 7H128" stroke="#223" stroke-width="1.200"/><path d="M129 5V11" stroke="#335"/>
</svg>

<!-- buttons -->
<div class="b t c" style="left:825px;top:622px;width:55px;height:13px;line-height:13px;border:1.500px solid #0078d4;background:#eee">Aceptar</div>
<div class="b t c" style="left:889px;top:622px;width:56px;height:13px;line-height:13px;border:1.500px solid #adadad;background:#eee">Cancelar</div>
<div class="b t c" style="left:954px;top:622px;width:58px;height:16px;line-height:15px;background:#cccccc;color:#8a8a8a;-webkit-text-stroke:0">Aplicar</div>

<!-- green arrow -->
<svg style="left:0;top:0" width="1024" height="767"><path d="M806 658L247 191" stroke="#00ab85" stroke-width="6.500" stroke-linecap="round"/><path d="M231 177L253 182L247 191L240 198Z" fill="#00ab85"/></svg>

</div></body></html>
